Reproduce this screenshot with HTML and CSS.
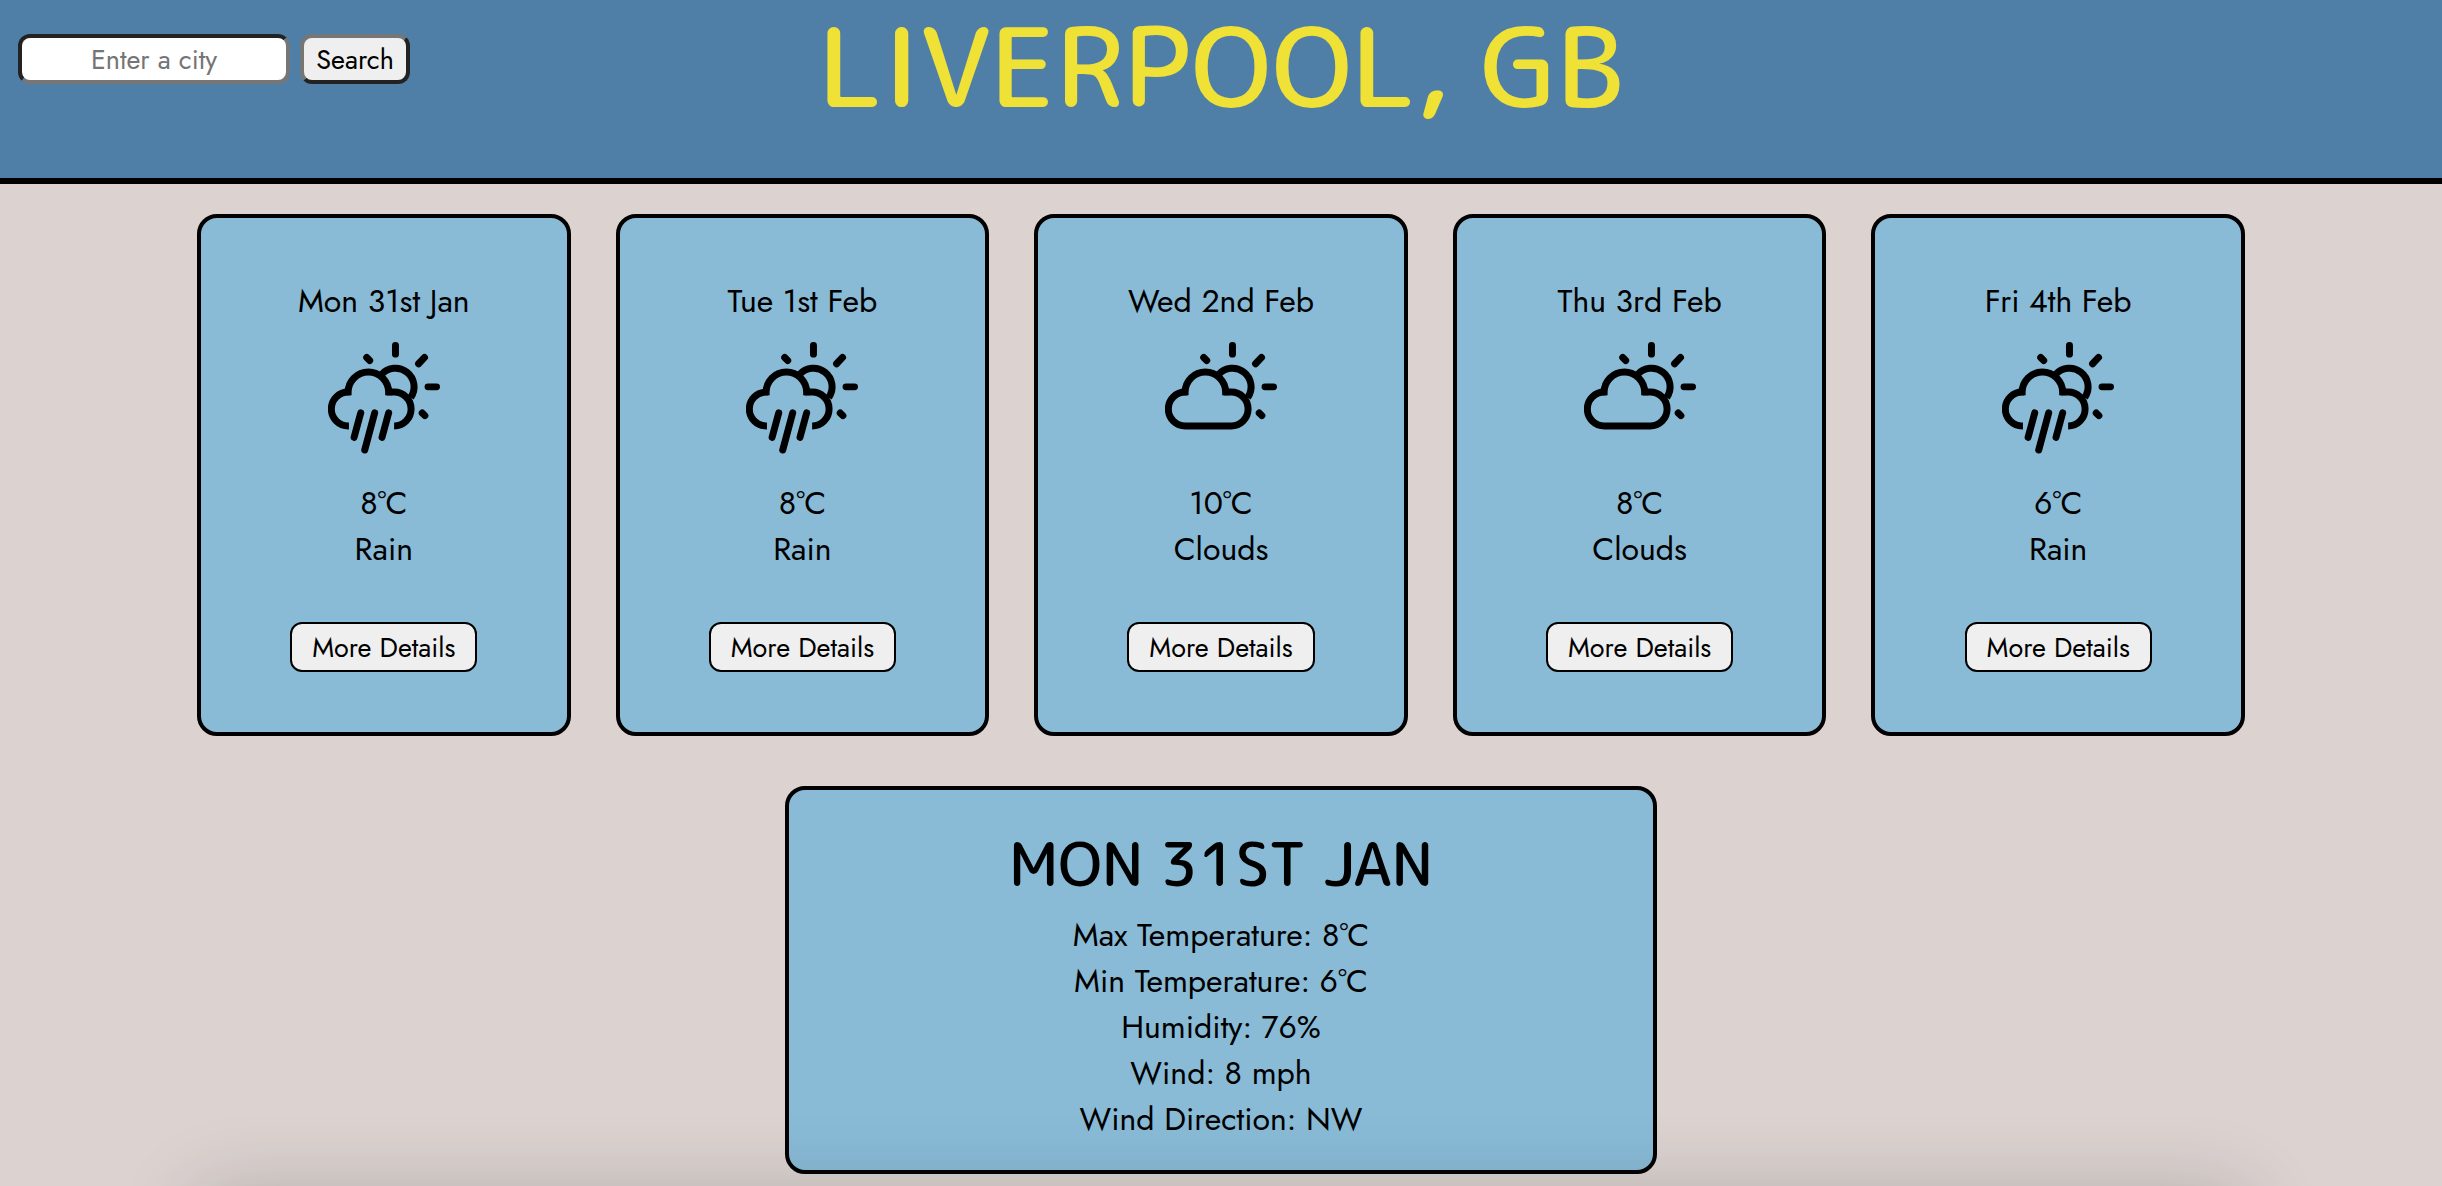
FILE: index.html
```
<!DOCTYPE html>
<html lang="en">
<head>
  <meta charset="utf-8">
  <meta name="viewport" content="width=device-width, initial-scale=1">
  <title>Weather forecast</title>
  <link rel="stylesheet" href="styles.css">
</head>
<body>
  <svg class="sprite" aria-hidden="true">
    <defs>
      <g id="sun">
        <path d="M161 98A56 56 0 0 1 249 167"/>
        <path stroke-linecap="round" d="M203 10.500V36.500M301 135H326.500M272.500 65.500L290.500 46.500M116.500 46.500L125.500 55.500M283.500 213.500L291.500 221.500"/>
      </g>
      <g id="cloud-top">
        <path d="M60.500 160V151.500A61 61 0 0 1 182.500 151.500V160"/>
      </g>
      <symbol id="icon-rain" viewBox="0 0 337 337">
        <use href="#sun"/>
        <use href="#cloud-top"/>
        <path d="M63 252.500H61A51 51 0 0 1 61 150.500H67M176 150.500H199A51 51 0 0 1 199 252.500"/>
        <path stroke-linecap="round" d="M98.500 213L78.500 287M140.500 213L110.500 325M182.500 213L162.500 287"/>
      </symbol>
      <symbol id="icon-clouds" viewBox="0 0 337 337">
        <use href="#sun"/>
        <use href="#cloud-top"/>
        <path d="M67 150.500H61A51 51 0 0 0 61 252.500H199A51 51 0 0 0 199 150.500H176"/>
      </symbol>
    </defs>
  </svg>

  <header class="header">
    <form class="search">
      <input class="search-input" type="text" placeholder="Enter a city" aria-label="City">
      <button class="search-button" type="button">Search</button>
    </form>
    <h1 class="city">LIVERPOOL, GB</h1>
  </header>

  <main class="main">
    <section class="forecast">
      <article class="card">
        <p class="card-text">Mon 31st Jan</p>
        <svg class="icon" role="img" aria-label="Rain"><use href="#icon-rain"/></svg>
        <p class="card-text">8°C</p>
        <p class="card-text">Rain</p>
        <button class="details-button" type="button">More Details</button>
      </article>
      <article class="card">
        <p class="card-text">Tue 1st Feb</p>
        <svg class="icon" role="img" aria-label="Rain"><use href="#icon-rain"/></svg>
        <p class="card-text">8°C</p>
        <p class="card-text">Rain</p>
        <button class="details-button" type="button">More Details</button>
      </article>
      <article class="card">
        <p class="card-text">Wed 2nd Feb</p>
        <svg class="icon" role="img" aria-label="Clouds"><use href="#icon-clouds"/></svg>
        <p class="card-text">10°C</p>
        <p class="card-text">Clouds</p>
        <button class="details-button" type="button">More Details</button>
      </article>
      <article class="card">
        <p class="card-text">Thu 3rd Feb</p>
        <svg class="icon" role="img" aria-label="Clouds"><use href="#icon-clouds"/></svg>
        <p class="card-text">8°C</p>
        <p class="card-text">Clouds</p>
        <button class="details-button" type="button">More Details</button>
      </article>
      <article class="card">
        <p class="card-text">Fri 4th Feb</p>
        <svg class="icon" role="img" aria-label="Rain"><use href="#icon-rain"/></svg>
        <p class="card-text">6°C</p>
        <p class="card-text">Rain</p>
        <button class="details-button" type="button">More Details</button>
      </article>
    </section>

    <section class="details">
      <h2 class="details-title">MON 31ST JAN</h2>
      <p class="details-text">Max Temperature: 8°C</p>
      <p class="details-text">Min Temperature: 6°C</p>
      <p class="details-text">Humidity: 76%</p>
      <p class="details-text">Wind: 8 mph</p>
      <p class="details-text">Wind Direction: NW</p>
    </section>
  </main>
  <div class="bottom-shade"></div>
</body>
</html>
```
FILE: styles.css
```
* {
  box-sizing: border-box;
}

body {
  margin: 0;
  background: #dcd3d1;
  color: #000;
  font-family: Jost, Lato, sans-serif;
  text-align: center;
}

h1, h2, p {
  margin: 0;
}

.sprite {
  position: absolute;
  width: 0;
  height: 0;
}

.header {
  display: grid;
  grid-template-columns: 1fr auto 1fr;
  align-items: start;
  min-height: 184px;
  padding: 0 18px;
  background: #4f7fa7;
  border-bottom: 6px solid #000;
}

.search {
  display: flex;
  gap: 10px;
  padding-top: 34px;
}

.search-input,
.search-button {
  height: 50px;
  border: 4px solid;
  border-radius: 12px;
  font: 27px Jost, Lato, sans-serif;
  text-align: center;
}

.search-input {
  width: 272px;
  padding: 0 8px;
  background: #fff;
  border-color: #222 #767676 #767676 #222;
}

.search-input::placeholder {
  color: #757575;
  opacity: 1;
}

.search-button {
  width: 110px;
  padding: 0;
  background: #efefef;
  color: #000;
  border-color: #767676 #222 #222 #767676;
}

.city {
  color: #f0e137;
  font: 500 110px/132px "M PLUS Rounded 1c", "Rounded Mplus 1c", "Noto Sans CJK JP", sans-serif;
}

.main {
  padding: 30px 18px 12px;
}

.forecast {
  display: grid;
  grid-template-columns: repeat(5, 1fr);
  gap: 45px;
  width: 90%;
  max-width: 2048px;
  margin: 0 auto 50px;
}

.card {
  display: flex;
  flex-direction: column;
  align-items: center;
  padding: 60px 16px;
  background: #89bbd7;
  border: 4px solid #000;
  border-radius: 20px;
}

.card-text {
  font-size: 32px;
  line-height: 46px;
}

.icon {
  width: 112px;
  height: 112px;
  margin: 18px 0 26px;
  fill: none;
  stroke: #000;
  stroke-width: 21;
}

.details-button {
  height: 50px;
  margin-top: 50px;
  padding: 0 20px;
  background: #efefef;
  color: #000;
  border: 2px solid #000;
  border-radius: 12px;
  font: 27px Jost, Lato, sans-serif;
}

.details {
  width: 90%;
  max-width: 872px;
  margin: 0 auto;
  padding: 28px 16px;
  background: #89bbd7;
  border: 4px solid #000;
  border-radius: 20px;
}

.details-title {
  margin-bottom: 4px;
  font: 500 60px/90px "M PLUS Rounded 1c", "Rounded Mplus 1c", "Noto Sans CJK JP", sans-serif;
}

.details-text {
  font-size: 32px;
  line-height: 46px;
}

/* Soft shade that rises from below the window */
.bottom-shade {
  position: fixed;
  top: 100%;
  left: 8%;
  right: 8%;
  height: 200px;
  border-radius: 20px;
  box-shadow: 0 6px 80px rgba(0, 20, 0, 0.2);
  pointer-events: none;
}
```
